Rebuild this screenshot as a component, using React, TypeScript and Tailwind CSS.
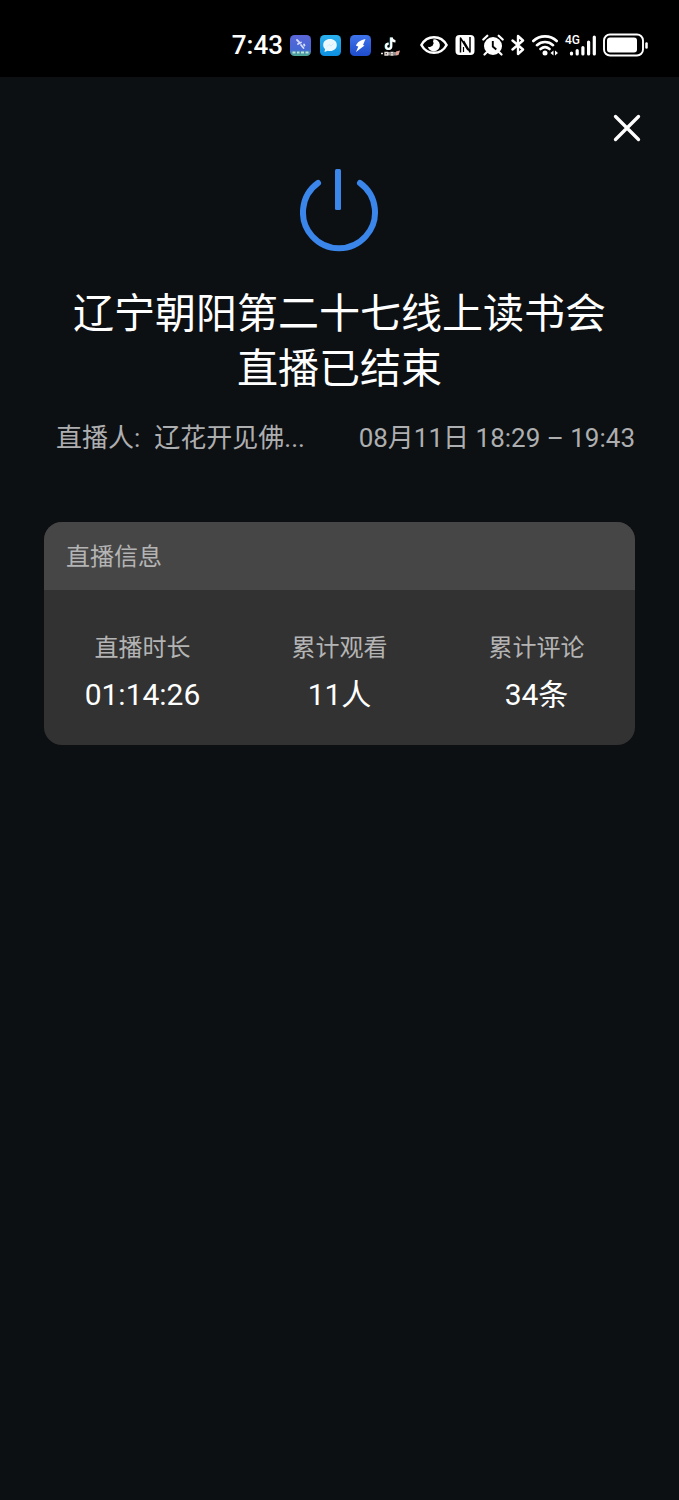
import type { ReactNode } from 'react'

const stats = [
  { label: '直播时长', value: '01:14:26' },
  { label: '累计观看', value: '11人' },
  { label: '累计评论', value: '34条' },
]

function AppIcons() {
  return (
    <div className="flex items-center gap-[9px]">
      <svg width="21" height="21" viewBox="0 0 21 21">
        <defs>
          <linearGradient id="app-violet" x1="0" y1="0" x2="0" y2="1">
            <stop offset="0" stopColor="#5b66d8" />
            <stop offset="0.7" stopColor="#4468d4" />
            <stop offset="1" stopColor="#4fae8e" />
          </linearGradient>
        </defs>
        <rect width="21" height="21" rx="4.5" fill="url(#app-violet)" />
        <path d="M7 5l2 2M8 9l3-1.500M11 10l2.500 3M14 9.500l.5 1" stroke="#d5dcff" strokeWidth="1.800" strokeLinecap="round" fill="none" />
        <path d="M2.500 17.500h3M7 17.500h2.500M11 17.500h3M15.500 17.500h3" stroke="#b5e8cc" strokeWidth="1.800" />
      </svg>
      <svg width="21" height="21" viewBox="0 0 21 21">
        <defs>
          <linearGradient id="app-sky" x1="0" y1="0" x2="0" y2="1">
            <stop offset="0" stopColor="#2bb0ee" />
            <stop offset="1" stopColor="#0c8fe0" />
          </linearGradient>
        </defs>
        <rect width="21" height="21" rx="4.5" fill="url(#app-sky)" />
        <path d="M10 4c4 0 6.800 2.500 6.800 6s-2.800 6-6.800 6c-.8 0-1.600-.1-2.300-.3L4.500 17l.6-3C3.900 13 3.200 11.600 3.200 10c0-3.500 2.800-6 6.800-6z" fill="#e9f7ff" />
        <path d="M7 11.500l2-2 2 1.500 2.500-2.500" stroke="#cdeafa" strokeWidth="1" fill="none" />
      </svg>
      <svg width="21" height="21" viewBox="0 0 21 21">
        <defs>
          <linearGradient id="app-blue" x1="0" y1="0" x2="0" y2="1">
            <stop offset="0" stopColor="#3f74ec" />
            <stop offset="1" stopColor="#1e4ccb" />
          </linearGradient>
        </defs>
        <rect width="21" height="21" rx="4.5" fill="url(#app-blue)" />
        <path d="M15.500 4l-2.500 6 1.500.5L6 17l2.300-5.500-2.300-.7C7 7.300 10.500 5 15.500 4z" fill="#fff" />
      </svg>
      <svg width="21" height="21" viewBox="0 0 21 21">
        <path d="M10.700 2.500v8.800a2.600 2.600 0 1 1-2.600-2.600" stroke="#4fd8dc" strokeWidth="2" fill="none" />
        <path d="M11.300 2.500v8.800a2.600 2.600 0 1 1-2.600-2.600M11.500 2.500c.3 2.200 1.800 3.700 4 3.800" stroke="#fff" strokeWidth="2.200" fill="none" />
        <path d="M1 18.500h2M5 17.500h2.500v2.500H5zM9 17v3.500M11 17.500h2v2.500h-2zM15 17v3.500" stroke="#e8e0dc" strokeWidth="1.300" fill="none" />
        <path d="M16 16.500l4-1-1.500 4.500-2.500.5z" fill="#e2a294" />
      </svg>
    </div>
  )
}

function SystemIcons() {
  return (
    <div className="flex items-center gap-[7px] text-white">
      <svg width="28" height="22" viewBox="0 0 28 22" fill="none">
        <path d="M1.400 11C4 6.200 8.600 3.200 14 3.200S24 6.200 26.600 11C24 15.800 19.400 18.800 14 18.800S4 15.800 1.400 11z" stroke="currentColor" strokeWidth="2.500" />
        <path d="M13.500 5.200a6.100 6.100 0 1 1-5.700 7.300c1 .9 2.600.7 3.300-.3.900.2 1.900-.5 1.800-1.500.9-.6 1-2 .1-2.600.3-1 .3-2 .5-2.900z" fill="currentColor" />
      </svg>
      <svg width="20" height="22" viewBox="0 0 20 22" fill="none">
        <rect x="0.500" y="1" width="19" height="20" rx="4" fill="currentColor" />
        <path d="M5.500 18.500V4l7.500 12" stroke="#000" strokeWidth="1.500" strokeLinejoin="round" />
        <path d="M15 3v15L8.500 7" stroke="#000" strokeWidth="1.500" strokeLinejoin="round" />
        <path d="M8.500 18v-5" stroke="#000" strokeWidth="1.200" />
      </svg>
      <svg width="22" height="22" viewBox="0 0 22 22" fill="none">
        <circle cx="11" cy="12" r="9" fill="currentColor" />
        <path d="M1.300 5.500l4-3.800M20.700 5.500l-4-3.800M4.500 18.500l-2 2M17.500 18.500l2 2" stroke="currentColor" strokeWidth="2.200" strokeLinecap="round" />
        <path d="M10.800 7v5.500l3.500 3" stroke="#000" strokeWidth="1.900" />
      </svg>
      <svg width="14" height="22" viewBox="0 0 14 22" fill="none">
        <path d="M1.500 6.500l10.500 9-5 4.500V2l5 4.500-10.500 9" stroke="currentColor" strokeWidth="2.400" strokeLinejoin="round" strokeLinecap="round" />
      </svg>
      <svg width="26" height="22" viewBox="0 0 26 22" fill="none">
        <path d="M1.300 7c6.500-6.200 16.900-6.200 23.400 0M5 11.200c4.500-4.200 11.500-4.200 16 0M8.500 15c2.700-2.300 6.300-2.300 9 0" stroke="currentColor" strokeWidth="2.600" strokeLinecap="round" />
        <circle cx="13" cy="19" r="2.500" fill="currentColor" />
        <path d="M21.500 16.500v5l-3-2.500zM23 16.500v5l3-2.500z" fill="currentColor" />
      </svg>
      <svg width="31" height="26" viewBox="0 0 31 26" fill="none" className="overflow-visible">
        <path d="M6.500 21v1M12.200 18.500V22M17.900 15.500V22M23.600 10V22M29.300 5V22" stroke="currentColor" strokeWidth="3.200" strokeLinecap="round" />
        <text x="0" y="12" fill="currentColor" className="text-[12px] font-medium">
          4G
        </text>
      </svg>
      <svg width="46" height="24" viewBox="0 0 46 24" fill="none">
        <rect x="1" y="1.500" width="39" height="21" rx="6" stroke="currentColor" strokeWidth="1.900" />
        <rect x="4" y="4.500" width="30" height="15" rx="3" fill="currentColor" />
        <path d="M43.500 10.500v4" stroke="currentColor" strokeWidth="2.500" strokeLinecap="round" />
      </svg>
    </div>
  )
}

function StatusBar() {
  return (
    <div className="flex h-[77px] items-center justify-end bg-black pt-[13px] pr-[30px] text-white">
      <span className="mr-[7px] text-[26px] leading-none font-medium">7:43</span>
      <AppIcons />
      <div className="ml-[19px]">
        <SystemIcons />
      </div>
    </div>
  )
}

function Card({ title, children }: { title: string; children: ReactNode }) {
  return (
    <section className="mx-[44px] mt-[64px] overflow-hidden rounded-[18px] bg-[#323232]">
      <h2 className="bg-[#464646] px-[22px] pt-[17px] pb-[15px] text-[24px] leading-[36px] text-[#b4b4b4]">{title}</h2>
      {children}
    </section>
  )
}

export default function App() {
  return (
    <div className="min-h-screen bg-[#0d1013] font-['Roboto','Noto_Sans_CJK_SC',sans-serif]">
      <StatusBar />
      <main>
        <div className="flex justify-end pt-[37px] pr-[38px]">
          <button type="button" aria-label="关闭" className="text-white">
            <svg width="28" height="28" viewBox="0 0 28 28" fill="none" className="block">
              <path d="M2.500 2.500l23 23M25.500 2.500l-23 23" stroke="currentColor" strokeWidth="3.300" strokeLinecap="round" />
            </svg>
          </button>
        </div>

        <svg width="80" height="84" viewBox="0 0 80 84" fill="none" className="mx-auto mt-[26px] block">
          <path d="M18 15a36 36 0 1 0 42 0" stroke="#3a86ea" strokeWidth="6" strokeLinecap="round" />
          <rect x="35" y="1" width="6" height="41" rx="1.500" fill="#3a86ea" />
        </svg>

        <h1 className="mx-[60px] mt-[35px] text-center text-[41px] leading-[55px] text-white">
          辽宁朝阳第二十七线上读书会
          <br />
          直播已结束
        </h1>

        <div className="mr-[44px] ml-[56px] mt-[21px] flex justify-between text-[26px] leading-[40px] whitespace-nowrap text-[#adaeb0]">
          <p className="flex gap-[14px]">
            <span>直播人:</span>
            <span>辽花开见佛...</span>
          </p>
          <p>08月11日 18:29 – 19:43</p>
        </div>

        <Card title="直播信息">
          <dl className="grid grid-cols-3 pt-[40px] pb-[28px] text-center">
            {stats.map((s) => (
              <div key={s.label}>
                <dt className="text-[24px] leading-[36px] text-[#b4b4b4]">{s.label}</dt>
                <dd className="mt-[7px] text-[30px] leading-[44px] text-white">{s.value}</dd>
              </div>
            ))}
          </dl>
        </Card>
      </main>
    </div>
  )
}
